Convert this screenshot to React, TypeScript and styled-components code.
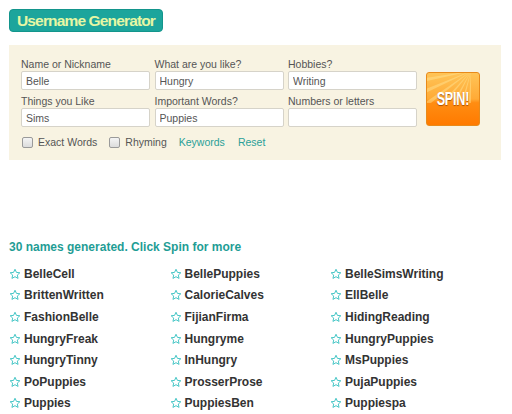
import React from "react";
import styled, { createGlobalStyle } from "styled-components";

const Global = createGlobalStyle`
  html, body { margin: 0; padding: 0; background: #ffffff; }
  body { font-family: "Liberation Sans", Arial, sans-serif; }
`;

const Page = styled.div`
  padding: 9px 11px 0 9px;
  width: 512px;
  box-sizing: border-box;
`;

const TitleBadge = styled.h1`
  display: inline-block;
  margin: 0;
  height: 23px;
  line-height: 22px;
  padding: 0 7px;
  box-sizing: border-box;
  background: #1ca59c;
  border: 1px solid #13958c;
  border-radius: 4px;
  color: #e6f7a4;
  font-family: "Liberation Sans", Arial, sans-serif;
  font-size: 15.5px;
  font-weight: bold;
  letter-spacing: -0.85px;
`;

const Panel = styled.div`
  margin-top: 13px;
  width: 492px;
  height: 115px;
  box-sizing: border-box;
  padding: 12px 12px 0 12px;
  background: #f8f3e2;
`;

const FormRow = styled.div`
  display: flex;
  align-items: flex-start;
`;

const Fields = styled.div`
  display: grid;
  grid-template-columns: 129px 129px 129px;
  column-gap: 4.5px;
  row-gap: 4px;
`;

const Field = styled.label`
  display: flex;
  flex-direction: column;
`;

const Label = styled.span`
  font-size: 10.5px;
  line-height: 14px;
  color: #555;
`;

const Input = styled.input`
  width: 129px;
  height: 19px;
  box-sizing: border-box;
  border: 1px solid #d6d3c9;
  border-radius: 2px;
  background: #fff;
  padding: 0 4px;
  font-family: "Liberation Sans", Arial, sans-serif;
  font-size: 10.5px;
  color: #555;
  outline: none;
`;

const SpinButton = styled.button`
  position: relative;
  margin: 15px 0 0 9px;
  width: 54px;
  height: 54px;
  padding: 0;
  border: 1px solid #e88a1a;
  border-radius: 3px;
  background: linear-gradient(to bottom, #ffc457 0%, #ffaa36 50%, #ff8d12 57%, #ff7a00 100%);
  overflow: hidden;
  cursor: pointer;
`;

const Rays = styled.svg`
  position: absolute;
  top: 0;
  right: 0;
  width: 52px;
  height: 30px;
`;

const SpinText = styled.span`
  position: relative;
  display: inline-block;
  transform: scaleX(0.68);
  color: #fff;
  font-family: "Liberation Sans", Arial, sans-serif;
  font-weight: bold;
  font-size: 18.5px;
  letter-spacing: -0.3px;
  text-shadow: 0 1px 1px rgba(140, 60, 0, 0.75);
`;

const OptionsRow = styled.div`
  display: flex;
  align-items: center;
  margin-top: 8px;
  height: 14px;
  font-size: 10.5px;
`;

const CheckLabel = styled.label<{ $gap: number }>`
  display: flex;
  align-items: center;
  margin-right: ${(p) => p.$gap}px;
  color: #555;
`;

const Box = styled.span`
  display: inline-block;
  width: 9px;
  height: 9px;
  border: 1px solid #9a9a9a;
  border-radius: 2px;
  background: linear-gradient(#f4f4f4, #dcdcdc);
  margin: 0 5px 0 1px;
`;

const Link = styled.a<{ $gap: number }>`
  color: #2a9f98;
  text-decoration: none;
  margin-right: ${(p) => p.$gap}px;
`;

const ResultHead = styled.div`
  margin-top: 80px;
  font-size: 12px;
  line-height: 14px;
  font-weight: bold;
  color: #1f9d95;
`;

const Names = styled.ul`
  list-style: none;
  margin: 9px 0 0 0;
  padding: 0;
  display: grid;
  grid-template-columns: repeat(3, 160.5px);
  grid-template-rows: repeat(7, 21.6px);
  grid-auto-flow: column;
`;

const NameItem = styled.li`
  display: flex;
  align-items: center;
  font-size: 12px;
  font-weight: bold;
  color: #333;
`;

const Star = styled.svg`
  width: 12px;
  height: 12px;
  margin-right: 3px;
  flex: none;
`;

const names = [
  "BelleCell", "BrittenWritten", "FashionBelle", "HungryFreak", "HungryTinny", "PoPuppies", "Puppies",
  "BellePuppies", "CalorieCalves", "FijianFirma", "Hungryme", "InHungry", "ProsserProse", "PuppiesBen",
  "BelleSimsWriting", "EllBelle", "HidingReading", "HungryPuppies", "MsPuppies", "PujaPuppies", "Puppiespa",
];

const StarIcon = () => (
  <Star viewBox="0 0 24 24">
    <path
      d="M12 2.5l2.9 6.3 6.8.7-5.1 4.6 1.5 6.7L12 17.4l-6.1 3.4 1.5-6.7-5.1-4.6 6.8-.7z"
      fill="none"
      stroke="#45c6c6"
      strokeWidth="2"
      strokeLinejoin="round"
    />
  </Star>
);

const fields = [
  { label: "Name or Nickname", value: "Belle" },
  { label: "What are you like?", value: "Hungry" },
  { label: "Hobbies?", value: "Writing" },
  { label: "Things you Like", value: "Sims" },
  { label: "Important Words?", value: "Puppies" },
  { label: "Numbers or letters", value: "" },
];

export default function App() {
  return (
    <Page>
      <Global />
      <TitleBadge>Username Generator</TitleBadge>
      <Panel>
        <FormRow>
          <Fields>
            {fields.map((f) => (
              <Field key={f.label}>
                <Label>{f.label}</Label>
                <Input defaultValue={f.value} />
              </Field>
            ))}
          </Fields>
          <SpinButton>
            <Rays viewBox="0 0 52 30">
              {[0, 1, 2, 3, 4, 5, 6, 7].map((i) => {
                const a = (Math.PI / 2) * (i / 7) + Math.PI / 2;
                const x = 44 + Math.cos(a) * 60;
                const y = -2 + Math.sin(a) * 60;
                const a2 = a + 0.07;
                const x2 = 44 + Math.cos(a2) * 60;
                const y2 = -2 + Math.sin(a2) * 60;
                return (
                  <polygon key={i} points={`44,-2 ${x},${y} ${x2},${y2}`} fill="rgba(255,235,160,0.4)" />
                );
              })}
            </Rays>
            <SpinText>SPIN!</SpinText>
          </SpinButton>
        </FormRow>
        <OptionsRow>
          <CheckLabel $gap={11}>
            <Box />
            Exact Words
          </CheckLabel>
          <CheckLabel $gap={12}>
            <Box />
            Rhyming
          </CheckLabel>
          <Link $gap={13}>Keywords</Link>
          <Link $gap={0}>Reset</Link>
        </OptionsRow>
      </Panel>
      <ResultHead>30 names generated. Click Spin for more</ResultHead>
      <Names>
        {names.map((n) => (
          <NameItem key={n}>
            <StarIcon />
            {n}
          </NameItem>
        ))}
      </Names>
    </Page>
  );
}
